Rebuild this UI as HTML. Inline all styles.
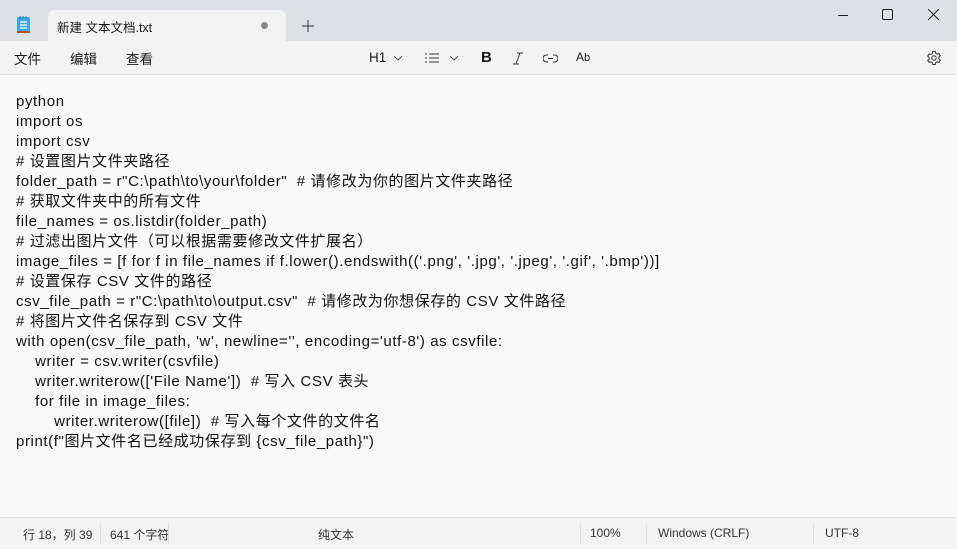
<!DOCTYPE html>
<html><head><meta charset="utf-8"><style>
*{margin:0;padding:0;box-sizing:border-box}
body{width:957px;height:549px;overflow:hidden;background:#f9f9f9;font-family:"Liberation Sans","Noto Sans CJK SC",sans-serif;color:#1a1a1a;position:relative}
.title{position:absolute;left:0;top:0;width:957px;height:41px;background:#dde1e6}
.tab{position:absolute;left:48px;top:10px;width:238px;height:31px;background:#f3f3f3;border-radius:7px 7px 0 0}
.tab span{position:absolute;left:9px;top:7px;font-size:12.5px;color:#1a1a1a}
.dot{position:absolute;left:213px;top:12px;width:7px;height:7px;border-radius:50%;background:#8a8a8a}
.menu{position:absolute;left:0;top:41px;width:957px;height:34px;background:#f3f3f3;border-bottom:1px solid #e3e3e3;font-size:13.5px}
.menu span{position:absolute;top:7px}
.text{position:absolute;left:16px;top:92px;font-size:15px;line-height:20px;white-space:pre;color:#111;letter-spacing:0.6px}
.status{position:absolute;left:0;top:517px;width:957px;height:32px;background:#f3f3f3;border-top:1px solid #e3e3e3;font-size:12px;color:#333}
.status span{position:absolute;top:8px}
.sep{position:absolute;top:6px;width:1px;height:20px;background:#e0e0e0}
</style></head><body>
<div class="title">
<svg style="position:absolute;left:16px;top:15px" width="16" height="19" viewBox="0 0 16 19"><rect x="1" y="2" width="13" height="16" rx="1.5" fill="#3fa7e0"/><rect x="1" y="16" width="13" height="2" fill="#b5541f"/><path d="M4 7h7M4 10h7M4 13h7" stroke="#fff" stroke-width="1.2"/><path d="M4 1v3M7 1v3M10 1v3" stroke="#2a6fa0" stroke-width="1"/></svg>
<div class="tab"><span>新建 文本文档.txt</span><div class="dot"></div></div>
<svg style="position:absolute;left:302px;top:20px" width="12" height="12"><path d="M6 0v12M0 6h12" stroke="#333" stroke-width="1"/></svg>
<svg style="position:absolute;left:838px;top:15px" width="10" height="1"><path d="M0 .5h10" stroke="#222"/></svg>
<svg style="position:absolute;left:882px;top:9px" width="11" height="11"><rect x=".5" y=".5" width="10" height="10" rx="1.5" fill="none" stroke="#222"/></svg>
<svg style="position:absolute;left:928px;top:9px" width="11" height="11"><path d="M0 0l11 11M11 0L0 11" stroke="#222"/></svg>
</div>
<div class="menu">
<span style="left:14px">文件</span><span style="left:70px">编辑</span><span style="left:126px">查看</span>
<span style="left:369px;top:9px">H1</span>
<svg style="position:absolute;left:394px;top:15px" width="8" height="5"><path d="M0 0l4 4 4-4" fill="none" stroke="#555"/></svg>
<svg style="position:absolute;left:425px;top:12px" width="14" height="10"><path d="M4 1h10M4 5h10M4 9h10" stroke="#333"/><path d="M0 1h2M0 5h2M0 9h2" stroke="#333"/></svg>
<svg style="position:absolute;left:450px;top:15px" width="8" height="5"><path d="M0 0l4 4 4-4" fill="none" stroke="#555"/></svg>
<span style="left:481px;font-weight:bold;font-size:15px;top:8px">B</span>
<svg style="position:absolute;left:512px;top:11px" width="12" height="13"><path d="M5 1h6M1 12h6M8 1L4 12" stroke="#333" fill="none"/></svg>
<svg style="position:absolute;left:543px;top:13px" width="15" height="9"><path d="M5 1H3.5a3.5 3.5 0 0 0 0 7H5M10 1h1.5a3.5 3.5 0 0 1 0 7H10M5 4.5h5" stroke="#333" fill="none"/></svg>
<span style="left:576px;font-size:12px;top:9px">A<span style="position:static;font-size:11px">b</span></span>
<svg style="position:absolute;left:926px;top:9px" width="16" height="16" viewBox="0 0 16 16"><circle cx="8" cy="8" r="2.2" fill="none" stroke="#333"/><path d="M6.7 1.5h2.6l.4 1.8 1.5.9 1.8-.6 1.3 2.2-1.4 1.3v1.8l1.4 1.3-1.3 2.2-1.8-.6-1.5.9-.4 1.8H6.7l-.4-1.8-1.5-.9-1.8.6L1.7 10.6l1.4-1.3V7.5L1.7 6.2 3 4l1.8.6 1.5-.9z" fill="none" stroke="#333"/></svg>
</div>
<div class="text">python
import os
import csv
# 设置图片文件夹路径
folder_path = r"C:\path\to\your\folder"  # 请修改为你的图片文件夹路径
# 获取文件夹中的所有文件
file_names = os.listdir(folder_path)
# 过滤出图片文件（可以根据需要修改文件扩展名）
image_files = [f for f in file_names if f.lower().endswith(('.png', '.jpg', '.jpeg', '.gif', '.bmp'))]
# 设置保存 CSV 文件的路径
csv_file_path = r"C:\path\to\output.csv"  # 请修改为你想保存的 CSV 文件路径
# 将图片文件名保存到 CSV 文件
with open(csv_file_path, 'w', newline='', encoding='utf-8') as csvfile:
    writer = csv.writer(csvfile)
    writer.writerow(['File Name'])  # 写入 CSV 表头
    for file in image_files:
        writer.writerow([file])  # 写入每个文件的文件名
print(f"图片文件名已经成功保存到 {csv_file_path}")</div>
<div class="status">
<span style="left:23px">行 18，列 39</span><div class="sep" style="left:100px"></div>
<span style="left:110px">641 个字符</span><div class="sep" style="left:168px"></div>
<span style="left:318px">纯文本</span><div class="sep" style="left:580px"></div>
<span style="left:590px">100%</span><div class="sep" style="left:646px"></div>
<span style="left:658px">Windows (CRLF)</span><div class="sep" style="left:813px"></div>
<span style="left:825px">UTF-8</span>
</div>
</body></html>
